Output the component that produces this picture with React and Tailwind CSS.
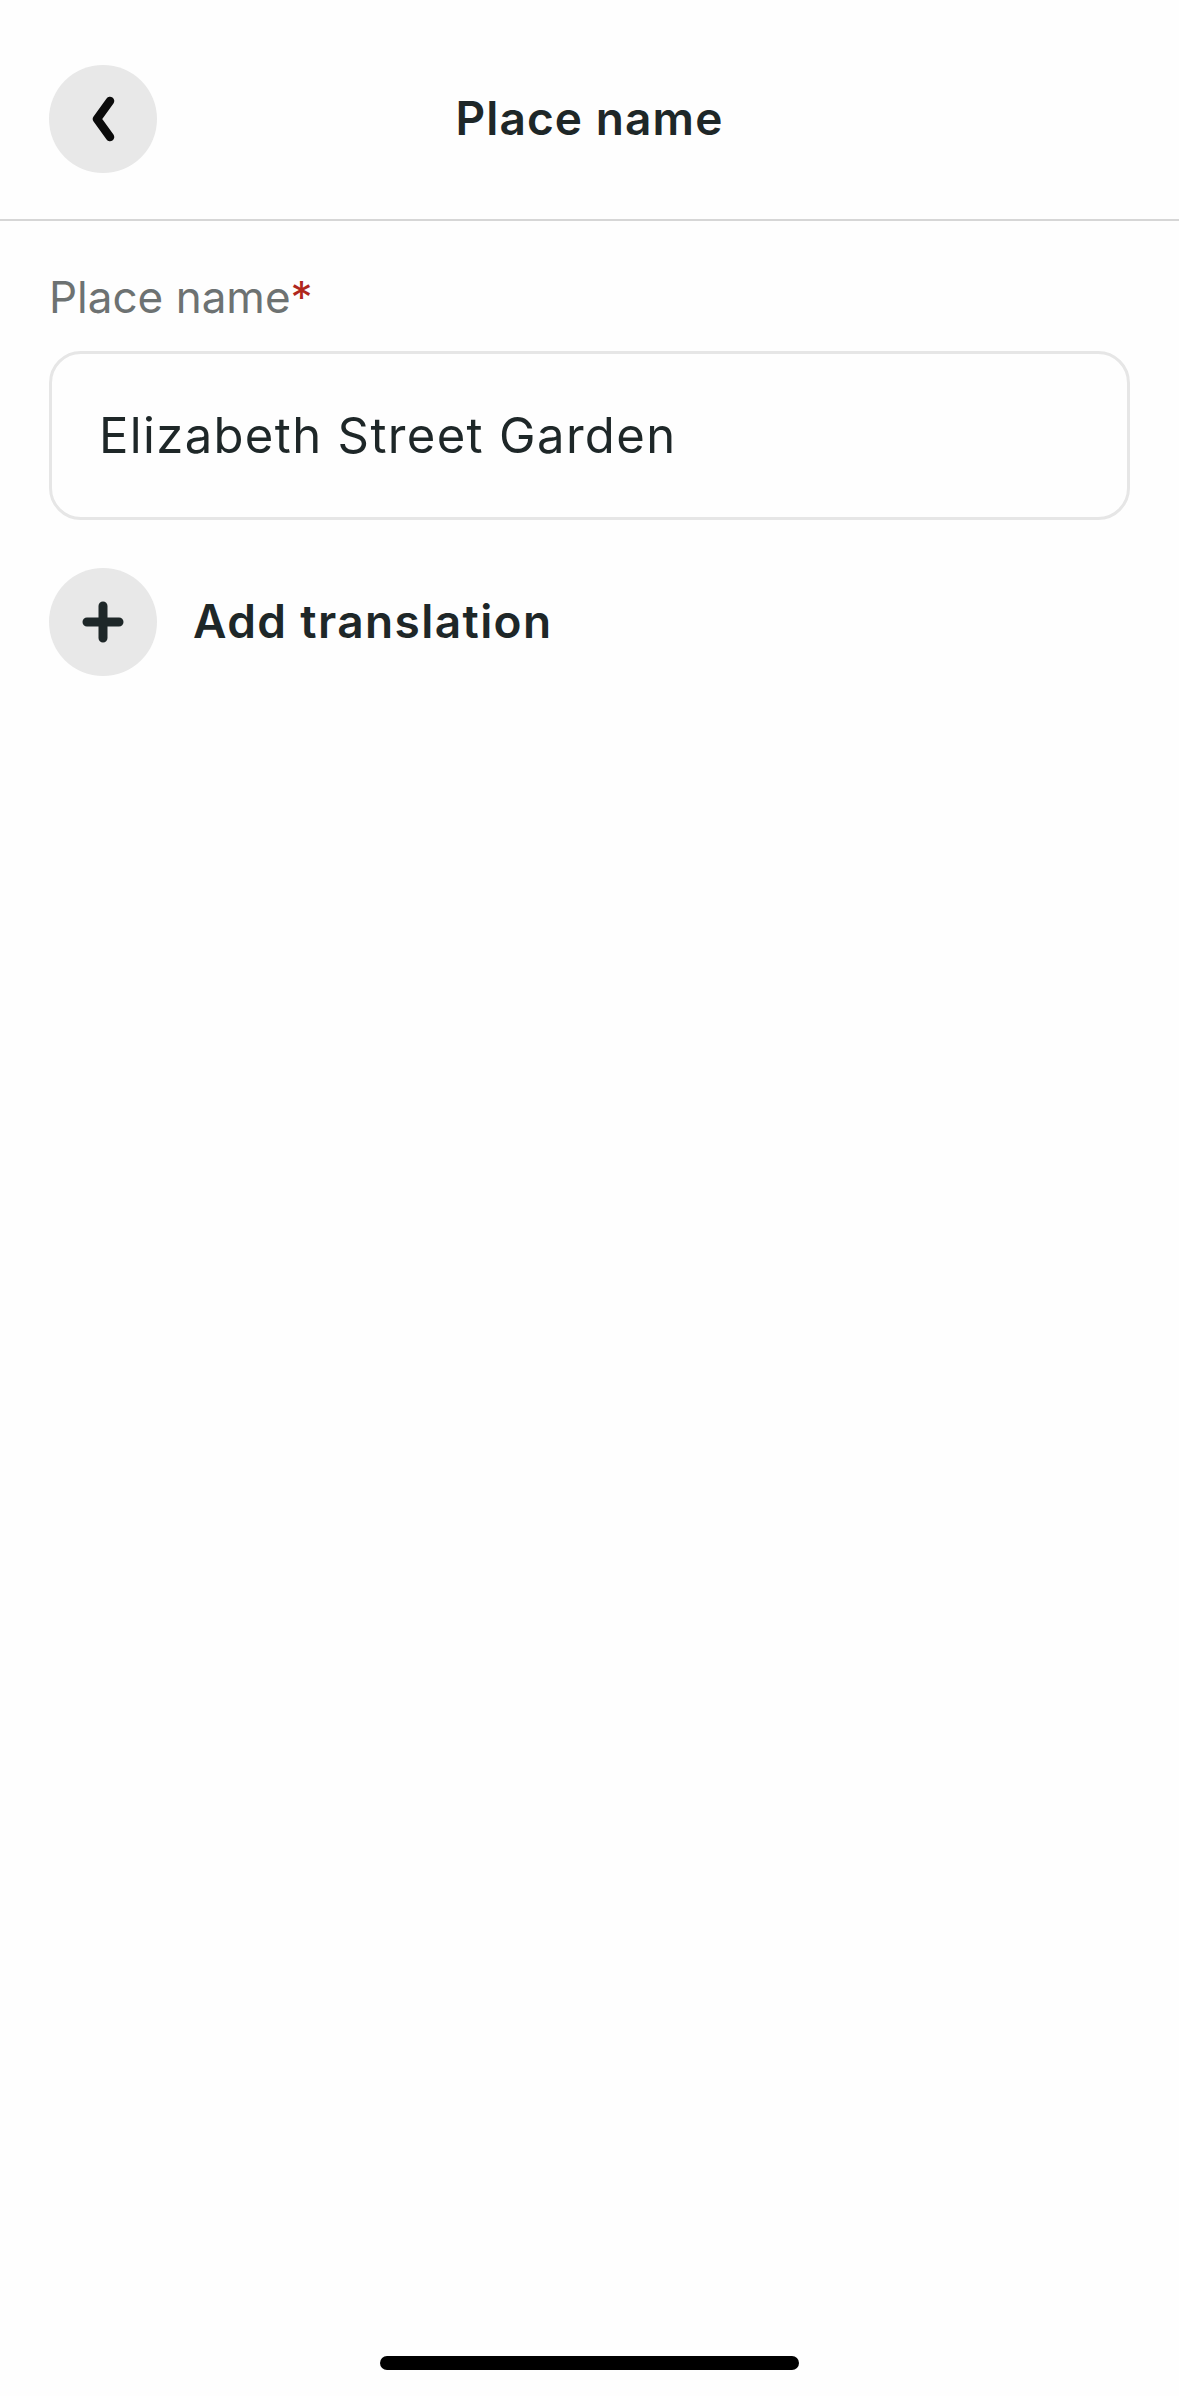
import { useState } from 'react';

function CircleButton({ children }) {
  return (
    <div className="flex h-[108px] w-[108px] shrink-0 items-center justify-center rounded-full bg-[#e8e8e8]">
      {children}
    </div>
  );
}

export default function App() {
  const [name, setName] = useState('Elizabeth Street Garden');

  return (
    <div
      className="flex h-[2396px] w-full flex-col bg-[#fefefe] text-[#1e2728]"
      style={{ fontFamily: 'Inter, "Noto Sans", sans-serif' }}
    >
      <header className="grid h-[221px] grid-cols-[1fr_auto_1fr] items-center border-b-2 border-[#d6d6d6] px-[49px] pt-[18px]">
        <CircleButton>
          <svg width="34" height="46" viewBox="0 0 34 46" fill="none">
            <path d="M24 5 L11 23 L24 41" stroke="#0b0b0b" strokeWidth="8.5" strokeLinecap="round" strokeLinejoin="round" />
          </svg>
        </CircleButton>
        <h1 className="text-[46px] font-semibold tracking-[1.1px]">Place name</h1>
        <div />
      </header>

      <main className="px-[49px] pt-[50px]">
        <label className="block text-[44px] leading-[1.2] text-[#6d7272]">
          Place name<span className="text-[#b0261c]">*</span>
        </label>
        <div className="mt-[27px] flex h-[169px] items-center rounded-[32px] border-[3px] border-[#e6e6e6] px-[47px]">
          <input
            value={name}
            onChange={(e) => setName(e.target.value)}
            className="w-full bg-transparent text-[49px] tracking-[1.35px] text-[#1e2728] outline-none"
          />
        </div>

        <div className="mt-[48px] flex items-center gap-[36px]">
          <CircleButton>
            <svg width="42" height="42" viewBox="0 0 42 42" fill="none">
              <path d="M21 5 V37 M5 21 H37" stroke="#1e2728" strokeWidth="9" strokeLinecap="round" />
            </svg>
          </CircleButton>
          <span className="text-[46px] font-semibold tracking-[1.4px]">Add translation</span>
        </div>
      </main>

      <div className="flex-1" />
      <div className="flex justify-center pb-[26px]">
        <div className="h-[14px] w-[419px] rounded-full bg-black" />
      </div>
    </div>
  );
}
